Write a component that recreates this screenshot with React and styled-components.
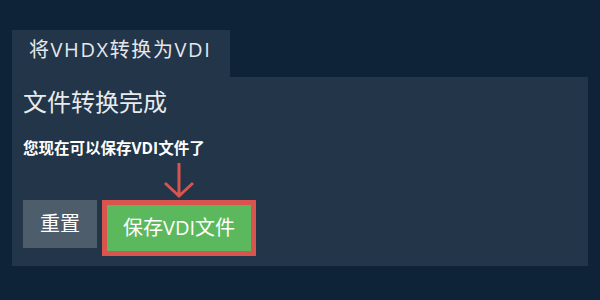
import React from "react";
import styled, { createGlobalStyle } from "styled-components";

const GlobalStyle = createGlobalStyle`
  html, body {
    margin: 0;
    padding: 0;
    background: #0f2338;
  }
  body {
    font-family: "Open Sans", "Noto Sans CJK SC", sans-serif;
  }
`;

const Page = styled.div`
  width: 600px;
  height: 300px;
  box-sizing: border-box;
  padding: 30px 12px 34px;
  display: flex;
  flex-direction: column;
`;

const Tab = styled.div`
  align-self: flex-start;
  height: 47px;
  padding: 0 19px 0 17px;
  background: #223549;
  color: #e4e8ec;
  font-size: 20px;
  letter-spacing: 1.6px;
  line-height: 40px;
`;

const Panel = styled.div`
  flex: 1;
  background: #223549;
  padding: 11px 11px 10px;
  display: flex;
  flex-direction: column;
`;

const Title = styled.h2`
  margin: 0;
  font-weight: 400;
  font-size: 24px;
  line-height: 28px;
  color: #e8ebee;
`;

const Message = styled.p`
  margin: 22px 0 0;
  font-weight: 700;
  font-size: 15.5px;
  line-height: 20px;
  color: #ffffff;
`;

const Actions = styled.div`
  margin-top: 42px;
  display: flex;
  align-items: flex-start;
  gap: 5px;
`;

const Button = styled.button`
  box-sizing: border-box;
  font-family: "Open Sans", "Noto Sans CJK SC", sans-serif;
  font-size: 20px;
  line-height: 1;
  color: #ffffff;
  cursor: pointer;
  height: ${(p) => (p.$highlight ? "56px" : "48px")};
  padding: 0 ${(p) => (p.$highlight ? "16px" : "17px")};
  background: ${(p) => (p.$highlight ? "#5cb85c" : "#4e5d6c")};
  border: ${(p) => (p.$highlight ? "5px solid #d9534f" : "none")};
`;

const SaveWrap = styled.div`
  position: relative;
`;

const Arrow = styled.svg`
  position: absolute;
  left: 50%;
  top: -38px;
  transform: translateX(-50%);
`;

export default function App() {
  return (
    <>
      <GlobalStyle />
      <Page>
        <Tab>将VHDX转换为VDI</Tab>
        <Panel>
          <Title>文件转换完成</Title>
          <Message>您现在可以保存VDI文件了</Message>
          <Actions>
            <Button>重置</Button>
            <SaveWrap>
              <Arrow width="32" height="36" viewBox="0 0 32 36">
                <path
                  d="M16 1 V34 M2 21 L16 34 L30 21"
                  fill="none"
                  stroke="#d9534f"
                  strokeWidth="3"
                />
              </Arrow>
              <Button $highlight>保存VDI文件</Button>
            </SaveWrap>
          </Actions>
        </Panel>
      </Page>
    </>
  );
}
